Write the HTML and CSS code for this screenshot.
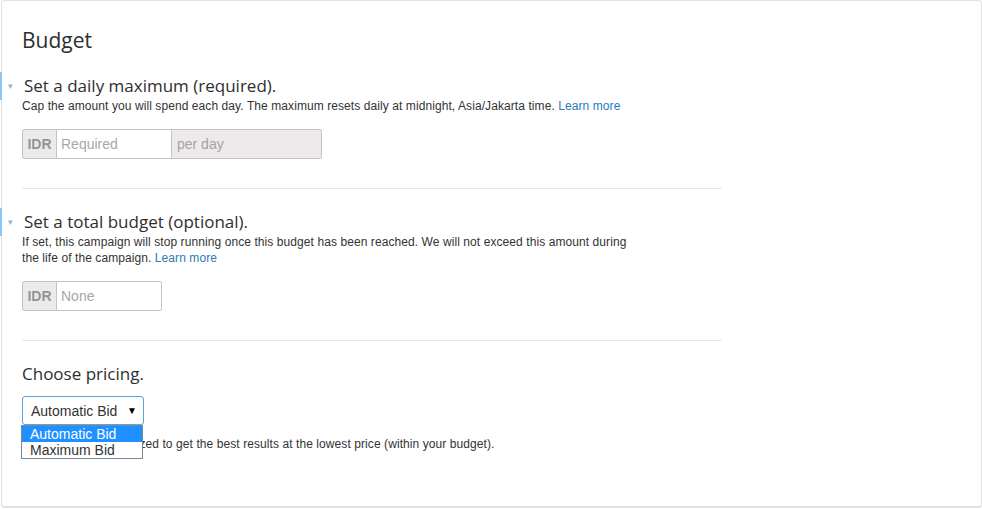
FILE: index.html
```html
<!DOCTYPE html>
<html lang="en">
<head>
  <meta charset="UTF-8">
  <meta name="viewport" content="width=device-width, initial-scale=1.0">
  <title>Budget</title>
  <link rel="stylesheet" href="styles.css">
</head>
<body>
  <div class="card">
    <h2 class="card-title">Budget</h2>

    <div class="section">
      <div class="section-head">
        <span class="caret">&#9662;</span>
        <h3>Set a daily maximum (required).</h3>
      </div>
      <p class="help">Cap the amount you will spend each day. The maximum resets daily at midnight, Asia/Jakarta time. <a href="#">Learn more</a></p>
      <div class="input-group">
        <span class="addon addon-cur">IDR</span>
        <input type="text" class="field field-daily" placeholder="Required">
        <span class="addon addon-suffix">per day</span>
      </div>
    </div>

    <hr class="divider">

    <div class="section">
      <div class="section-head">
        <span class="caret">&#9662;</span>
        <h3>Set a total budget (optional).</h3>
      </div>
      <p class="help help-wrap">If set, this campaign will stop running once this budget has been reached. We will not exceed this amount during the life of the campaign. <a href="#">Learn more</a></p>
      <div class="input-group">
        <span class="addon addon-cur">IDR</span>
        <input type="text" class="field field-total" placeholder="None">
      </div>
    </div>

    <hr class="divider">

    <div class="section">
      <h3 class="plain-head">Choose pricing.</h3>
      <div class="dropdown">
        <div class="select">
          <span>Automatic Bid</span>
          <span class="arrow">&#9660;</span>
        </div>
        <ul class="options">
          <li class="active">Automatic Bid</li>
          <li>Maximum Bid</li>
        </ul>
      </div>
      <p class="help">Your bid will be optimized to get the best results at the lowest price (within your budget).</p>
    </div>
  </div>
</body>
</html>
```

FILE: styles.css
```css
* {
  margin: 0;
  padding: 0;
  box-sizing: border-box;
}

body {
  background: #fff;
  font-family: 'Liberation Sans', Arial, sans-serif;
  color: #333;
  padding: 0 1px 0 1px;
}

.card {
  width: 981px;
  height: 508px;
  border: 1px solid #e3e0dd;
  border-bottom-width: 2px;
  border-radius: 4px;
  padding: 26px 20px 0 20px;
}

.card-title,
.section-head h3,
.plain-head {
  font-family: 'Open Sans', sans-serif;
  font-weight: 400;
  color: #2e2e2e;
}

.card-title {
  font-size: 21px;
  line-height: 26px;
  margin-bottom: 19px;
}

.section-head {
  position: relative;
  height: 28px;
  display: flex;
  align-items: center;
}

/* blue bar hanging in the card's left gutter */
.section-head::before {
  content: '';
  position: absolute;
  left: -22px;
  top: 0;
  width: 2px;
  height: 28px;
  background: #8cc6f2;
}

.caret {
  position: absolute;
  left: -14px;
  top: 9px;
  font-size: 9px;
  color: #8fb3d3;
}

.section-head h3,
.plain-head {
  font-size: 17px;
  line-height: 28px;
  padding-left: 2px;
}

.plain-head {
  padding-left: 0;
}

.help {
  font-size: 12px;
  line-height: 16px;
  letter-spacing: 0.08px;
  color: #333;
  margin-top: -2px;
}

.help-wrap {
  max-width: 620px;
}

.help a {
  color: #2b7bba;
  text-decoration: none;
}

.input-group {
  display: flex;
  margin-top: 15px;
  height: 30px;
}

.addon {
  display: flex;
  align-items: center;
  background: #eeeae9;
  border: 1px solid #bcc6cc;
  font-size: 14px;
  color: #a3a3a3;
}

.addon-cur {
  width: 35px;
  justify-content: center;
  font-weight: bold;
  color: #90969b;
  border-radius: 2px 0 0 2px;
}

.addon-suffix {
  width: 150px;
  padding-left: 5px;
  border-left: none;
  border-radius: 0 2px 2px 0;
}

.field {
  border: 1px solid #bcc6cc;
  border-left: none;
  font-family: 'Liberation Sans', Arial, sans-serif;
  font-size: 14px;
  padding: 0 4px;
  outline: none;
  color: #333;
}

.field::placeholder {
  color: #a8a8a8;
}

.field-daily {
  width: 115px;
}

.field-total {
  width: 105px;
  border-radius: 0 2px 2px 0;
}

.divider {
  border: none;
  border-top: 1px solid #e6e6e6;
  width: 700px;
  margin: 29px 0 19px;
}

.plain-head {
  margin-top: 9px;
}

.dropdown {
  position: relative;
  margin-top: 8px;
  width: 122px;
  height: 29px;
}

.select {
  height: 29px;
  border: 1px solid #5aa3dd;
  border-radius: 3px;
  display: flex;
  align-items: center;
  justify-content: space-between;
  padding: 0 6px 0 8px;
  font-size: 14px;
  color: #333;
}

.arrow {
  font-size: 10px;
  color: #000;
}

/* open option list laid over the text below */
.options {
  position: absolute;
  left: -1px;
  top: 29px;
  width: 122px;
  list-style: none;
  background: #fff;
  border: 1px solid #7b8894;
  font-size: 14px;
  line-height: 16px;
}

.options li {
  padding-left: 8px;
  color: #333;
}

.options li.active {
  background: #1e90ff;
  color: #fff;
}

.dropdown + .help {
  margin-top: 11px;
}
```
